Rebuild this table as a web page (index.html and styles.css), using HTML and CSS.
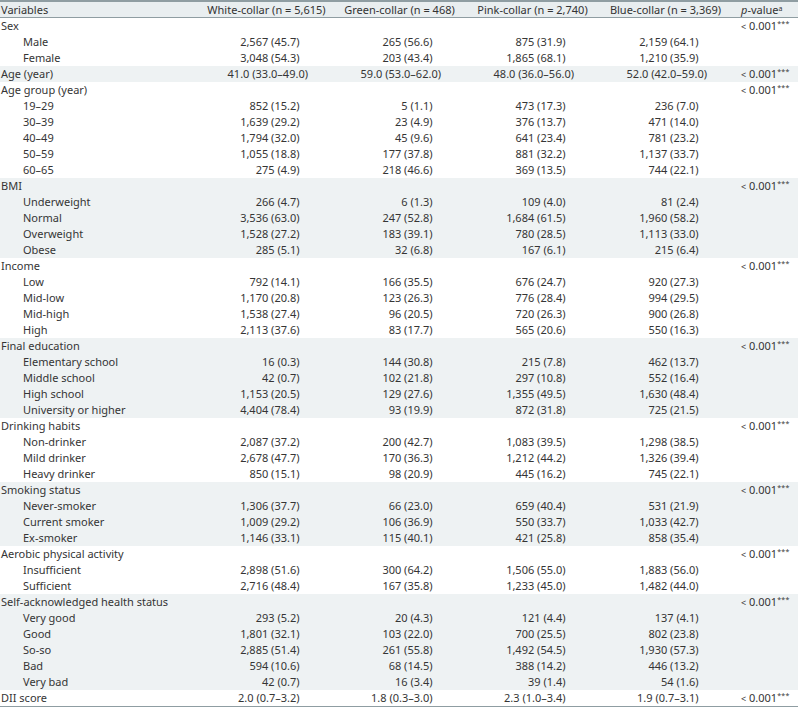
FILE: index.html
```html
<!DOCTYPE html>
<html lang="en">
<head>
<meta charset="utf-8">
<title>Table</title>
<link rel="stylesheet" href="styles.css">
</head>
<body>
<table class="tbl">
<colgroup>
<col class="c-var"><col class="c-grp"><col class="c-grp"><col class="c-grp"><col class="c-grp"><col class="c-p">
</colgroup>
<thead>
<tr><th class="var">Variables</th><th>White-collar (n = 5,615)</th><th>Green-collar (n = 468)</th><th>Pink-collar (n = 2,740)</th><th>Blue-collar (n = 3,369)</th><th class="p"><em>p</em>-value<sup class="sa">a</sup></th></tr>
</thead>
<tbody>
<tr><td>Sex</td><td></td><td></td><td></td><td></td><td class="pv"><span class="lt">&lt;</span> 0.001<sup class="st">***</sup></td></tr>
<tr><td class="sub">Male</td><td class="v">2,567 (45<span class="f">.7)</span></td><td class="v">265 (56<span class="f">.6)</span></td><td class="v">875 (31<span class="f">.9)</span></td><td class="v">2,159 (64<span class="f">.1)</span></td><td></td></tr>
<tr><td class="sub">Female</td><td class="v">3,048 (54<span class="f">.3)</span></td><td class="v">203 (43<span class="f">.4)</span></td><td class="v">1,865 (68<span class="f">.1)</span></td><td class="v">1,210 (35<span class="f">.9)</span></td><td></td></tr>
<tr class="sh"><td>Age (year)</td><td class="v m">41.0 (33.0–49.0)</td><td class="v m">59.0 (53.0–62.0)</td><td class="v m">48.0 (36.0–56.0)</td><td class="v m">52.0 (42.0–59.0)</td><td class="pv"><span class="lt">&lt;</span> 0.001<sup class="st">***</sup></td></tr>
<tr><td>Age group (year)</td><td></td><td></td><td></td><td></td><td class="pv"><span class="lt">&lt;</span> 0.001<sup class="st">***</sup></td></tr>
<tr><td class="sub">19–29</td><td class="v">852 (15<span class="f">.2)</span></td><td class="v">5 (1<span class="f">.1)</span></td><td class="v">473 (17<span class="f">.3)</span></td><td class="v">236 (7<span class="f">.0)</span></td><td></td></tr>
<tr><td class="sub">30–39</td><td class="v">1,639 (29<span class="f">.2)</span></td><td class="v">23 (4<span class="f">.9)</span></td><td class="v">376 (13<span class="f">.7)</span></td><td class="v">471 (14<span class="f">.0)</span></td><td></td></tr>
<tr><td class="sub">40–49</td><td class="v">1,794 (32<span class="f">.0)</span></td><td class="v">45 (9<span class="f">.6)</span></td><td class="v">641 (23<span class="f">.4)</span></td><td class="v">781 (23<span class="f">.2)</span></td><td></td></tr>
<tr><td class="sub">50–59</td><td class="v">1,055 (18<span class="f">.8)</span></td><td class="v">177 (37<span class="f">.8)</span></td><td class="v">881 (32<span class="f">.2)</span></td><td class="v">1,137 (33<span class="f">.7)</span></td><td></td></tr>
<tr><td class="sub">60–65</td><td class="v">275 (4<span class="f">.9)</span></td><td class="v">218 (46<span class="f">.6)</span></td><td class="v">369 (13<span class="f">.5)</span></td><td class="v">744 (22<span class="f">.1)</span></td><td></td></tr>
<tr class="sh"><td>BMI</td><td></td><td></td><td></td><td></td><td class="pv"><span class="lt">&lt;</span> 0.001<sup class="st">***</sup></td></tr>
<tr class="sh"><td class="sub">Underweight</td><td class="v">266 (4<span class="f">.7)</span></td><td class="v">6 (1<span class="f">.3)</span></td><td class="v">109 (4<span class="f">.0)</span></td><td class="v">81 (2<span class="f">.4)</span></td><td></td></tr>
<tr class="sh"><td class="sub">Normal</td><td class="v">3,536 (63<span class="f">.0)</span></td><td class="v">247 (52<span class="f">.8)</span></td><td class="v">1,684 (61<span class="f">.5)</span></td><td class="v">1,960 (58<span class="f">.2)</span></td><td></td></tr>
<tr class="sh"><td class="sub">Overweight</td><td class="v">1,528 (27<span class="f">.2)</span></td><td class="v">183 (39<span class="f">.1)</span></td><td class="v">780 (28<span class="f">.5)</span></td><td class="v">1,113 (33<span class="f">.0)</span></td><td></td></tr>
<tr class="sh"><td class="sub">Obese</td><td class="v">285 (5<span class="f">.1)</span></td><td class="v">32 (6<span class="f">.8)</span></td><td class="v">167 (6<span class="f">.1)</span></td><td class="v">215 (6<span class="f">.4)</span></td><td></td></tr>
<tr><td>Income</td><td></td><td></td><td></td><td></td><td class="pv"><span class="lt">&lt;</span> 0.001<sup class="st">***</sup></td></tr>
<tr><td class="sub">Low</td><td class="v">792 (14<span class="f">.1)</span></td><td class="v">166 (35<span class="f">.5)</span></td><td class="v">676 (24<span class="f">.7)</span></td><td class="v">920 (27<span class="f">.3)</span></td><td></td></tr>
<tr><td class="sub">Mid-low</td><td class="v">1,170 (20<span class="f">.8)</span></td><td class="v">123 (26<span class="f">.3)</span></td><td class="v">776 (28<span class="f">.4)</span></td><td class="v">994 (29<span class="f">.5)</span></td><td></td></tr>
<tr><td class="sub">Mid-high</td><td class="v">1,538 (27<span class="f">.4)</span></td><td class="v">96 (20<span class="f">.5)</span></td><td class="v">720 (26<span class="f">.3)</span></td><td class="v">900 (26<span class="f">.8)</span></td><td></td></tr>
<tr><td class="sub">High</td><td class="v">2,113 (37<span class="f">.6)</span></td><td class="v">83 (17<span class="f">.7)</span></td><td class="v">565 (20<span class="f">.6)</span></td><td class="v">550 (16<span class="f">.3)</span></td><td></td></tr>
<tr class="sh"><td>Final education</td><td></td><td></td><td></td><td></td><td class="pv"><span class="lt">&lt;</span> 0.001<sup class="st">***</sup></td></tr>
<tr class="sh"><td class="sub">Elementary school</td><td class="v">16 (0<span class="f">.3)</span></td><td class="v">144 (30<span class="f">.8)</span></td><td class="v">215 (7<span class="f">.8)</span></td><td class="v">462 (13<span class="f">.7)</span></td><td></td></tr>
<tr class="sh"><td class="sub">Middle school</td><td class="v">42 (0<span class="f">.7)</span></td><td class="v">102 (21<span class="f">.8)</span></td><td class="v">297 (10<span class="f">.8)</span></td><td class="v">552 (16<span class="f">.4)</span></td><td></td></tr>
<tr class="sh"><td class="sub">High school</td><td class="v">1,153 (20<span class="f">.5)</span></td><td class="v">129 (27<span class="f">.6)</span></td><td class="v">1,355 (49<span class="f">.5)</span></td><td class="v">1,630 (48<span class="f">.4)</span></td><td></td></tr>
<tr class="sh"><td class="sub">University or higher</td><td class="v">4,404 (78<span class="f">.4)</span></td><td class="v">93 (19<span class="f">.9)</span></td><td class="v">872 (31<span class="f">.8)</span></td><td class="v">725 (21<span class="f">.5)</span></td><td></td></tr>
<tr><td>Drinking habits</td><td></td><td></td><td></td><td></td><td class="pv"><span class="lt">&lt;</span> 0.001<sup class="st">***</sup></td></tr>
<tr><td class="sub">Non-drinker</td><td class="v">2,087 (37<span class="f">.2)</span></td><td class="v">200 (42<span class="f">.7)</span></td><td class="v">1,083 (39<span class="f">.5)</span></td><td class="v">1,298 (38<span class="f">.5)</span></td><td></td></tr>
<tr><td class="sub">Mild drinker</td><td class="v">2,678 (47<span class="f">.7)</span></td><td class="v">170 (36<span class="f">.3)</span></td><td class="v">1,212 (44<span class="f">.2)</span></td><td class="v">1,326 (39<span class="f">.4)</span></td><td></td></tr>
<tr><td class="sub">Heavy drinker</td><td class="v">850 (15<span class="f">.1)</span></td><td class="v">98 (20<span class="f">.9)</span></td><td class="v">445 (16<span class="f">.2)</span></td><td class="v">745 (22<span class="f">.1)</span></td><td></td></tr>
<tr class="sh"><td>Smoking status</td><td></td><td></td><td></td><td></td><td class="pv"><span class="lt">&lt;</span> 0.001<sup class="st">***</sup></td></tr>
<tr class="sh"><td class="sub">Never-smoker</td><td class="v">1,306 (37<span class="f">.7)</span></td><td class="v">66 (23<span class="f">.0)</span></td><td class="v">659 (40<span class="f">.4)</span></td><td class="v">531 (21<span class="f">.9)</span></td><td></td></tr>
<tr class="sh"><td class="sub">Current smoker</td><td class="v">1,009 (29<span class="f">.2)</span></td><td class="v">106 (36<span class="f">.9)</span></td><td class="v">550 (33<span class="f">.7)</span></td><td class="v">1,033 (42<span class="f">.7)</span></td><td></td></tr>
<tr class="sh"><td class="sub">Ex-smoker</td><td class="v">1,146 (33<span class="f">.1)</span></td><td class="v">115 (40<span class="f">.1)</span></td><td class="v">421 (25<span class="f">.8)</span></td><td class="v">858 (35<span class="f">.4)</span></td><td></td></tr>
<tr><td>Aerobic physical activity</td><td></td><td></td><td></td><td></td><td class="pv"><span class="lt">&lt;</span> 0.001<sup class="st">***</sup></td></tr>
<tr><td class="sub">Insufficient</td><td class="v">2,898 (51<span class="f">.6)</span></td><td class="v">300 (64<span class="f">.2)</span></td><td class="v">1,506 (55<span class="f">.0)</span></td><td class="v">1,883 (56<span class="f">.0)</span></td><td></td></tr>
<tr><td class="sub">Sufficient</td><td class="v">2,716 (48<span class="f">.4)</span></td><td class="v">167 (35<span class="f">.8)</span></td><td class="v">1,233 (45<span class="f">.0)</span></td><td class="v">1,482 (44<span class="f">.0)</span></td><td></td></tr>
<tr class="sh"><td>Self-acknowledged health status</td><td></td><td></td><td></td><td></td><td class="pv"><span class="lt">&lt;</span> 0.001<sup class="st">***</sup></td></tr>
<tr class="sh"><td class="sub">Very good</td><td class="v">293 (5<span class="f">.2)</span></td><td class="v">20 (4<span class="f">.3)</span></td><td class="v">121 (4<span class="f">.4)</span></td><td class="v">137 (4<span class="f">.1)</span></td><td></td></tr>
<tr class="sh"><td class="sub">Good</td><td class="v">1,801 (32<span class="f">.1)</span></td><td class="v">103 (22<span class="f">.0)</span></td><td class="v">700 (25<span class="f">.5)</span></td><td class="v">802 (23<span class="f">.8)</span></td><td></td></tr>
<tr class="sh"><td class="sub">So-so</td><td class="v">2,885 (51<span class="f">.4)</span></td><td class="v">261 (55<span class="f">.8)</span></td><td class="v">1,492 (54<span class="f">.5)</span></td><td class="v">1,930 (57<span class="f">.3)</span></td><td></td></tr>
<tr class="sh"><td class="sub">Bad</td><td class="v">594 (10<span class="f">.6)</span></td><td class="v">68 (14<span class="f">.5)</span></td><td class="v">388 (14<span class="f">.2)</span></td><td class="v">446 (13<span class="f">.2)</span></td><td></td></tr>
<tr class="sh"><td class="sub">Very bad</td><td class="v">42 (0<span class="f">.7)</span></td><td class="v">16 (3<span class="f">.4)</span></td><td class="v">39 (1<span class="f">.4)</span></td><td class="v">54 (1<span class="f">.6)</span></td><td></td></tr>
<tr class="last"><td>DII score</td><td class="v">2.0 (0.7–3<span class="f">.2)</span></td><td class="v">1.8 (0.3–3<span class="f">.0)</span></td><td class="v">2.3 (1.0–3<span class="f">.4)</span></td><td class="v">1.9 (0.7–3<span class="f">.1)</span></td><td class="pv"><span class="lt">&lt;</span> 0.001<sup class="st">***</sup></td></tr>
</tbody>
</table>
</body>
</html>
```

FILE: styles.css
```css
html, body {
  margin: 0;
  padding: 0;
  background: #ffffff;
}

body {
  font-family: "Noto Sans", "Open Sans", sans-serif;
  font-size: 11px;
  color: #353535;
}

.tbl {
  width: 798px;
  table-layout: fixed;
  border-collapse: separate;
  border-spacing: 0;
}

.c-var { width: 200px; }
.c-grp { width: 133px; }
.c-p { width: 66px; }

.tbl th {
  font-weight: normal;
  padding: 0;
  line-height: 15px;
  height: 15px;
  background: #e9eef0;
  border-top: 2px solid #8f9da2;
  border-bottom: 1px solid #8f9da2;
  text-align: center;
  white-space: nowrap;
  color: #333;
}

.tbl th.var {
  text-align: left;
  padding-left: 1px;
}

.tbl th.p {
  text-align: left;
  padding-left: 9px;
}

.tbl th em {
  font-style: italic;
}

.sa {
  font-size: 7px;
  vertical-align: 3px;
  line-height: 0;
}

.tbl tbody tr {
  height: 16px;
}

.tbl td {
  padding: 0 0 0 1px;
  line-height: 16px;
  height: 16px;
  white-space: nowrap;
  overflow: hidden;
}

.tbl td.sub {
  padding-left: 23px;
}

.tbl td.v {
  text-align: right;
  padding-right: 33px;
}

.tbl td.m {
  padding-right: 25px;
}

.f {
  display: inline-block;
  width: 13px;
  text-align: left;
  line-height: 0;
}

.tbl td.pv {
  padding-left: 9px;
}

.lt {
  font-size: 9px;
  line-height: 0;
}

.st {
  font-size: 7px;
  vertical-align: 4px;
  line-height: 0;
  letter-spacing: 0.3px;
}

.sh td {
  background: #eef2f3;
}

.last td {
  border-bottom: 1px solid #8f9da2;
}
```
